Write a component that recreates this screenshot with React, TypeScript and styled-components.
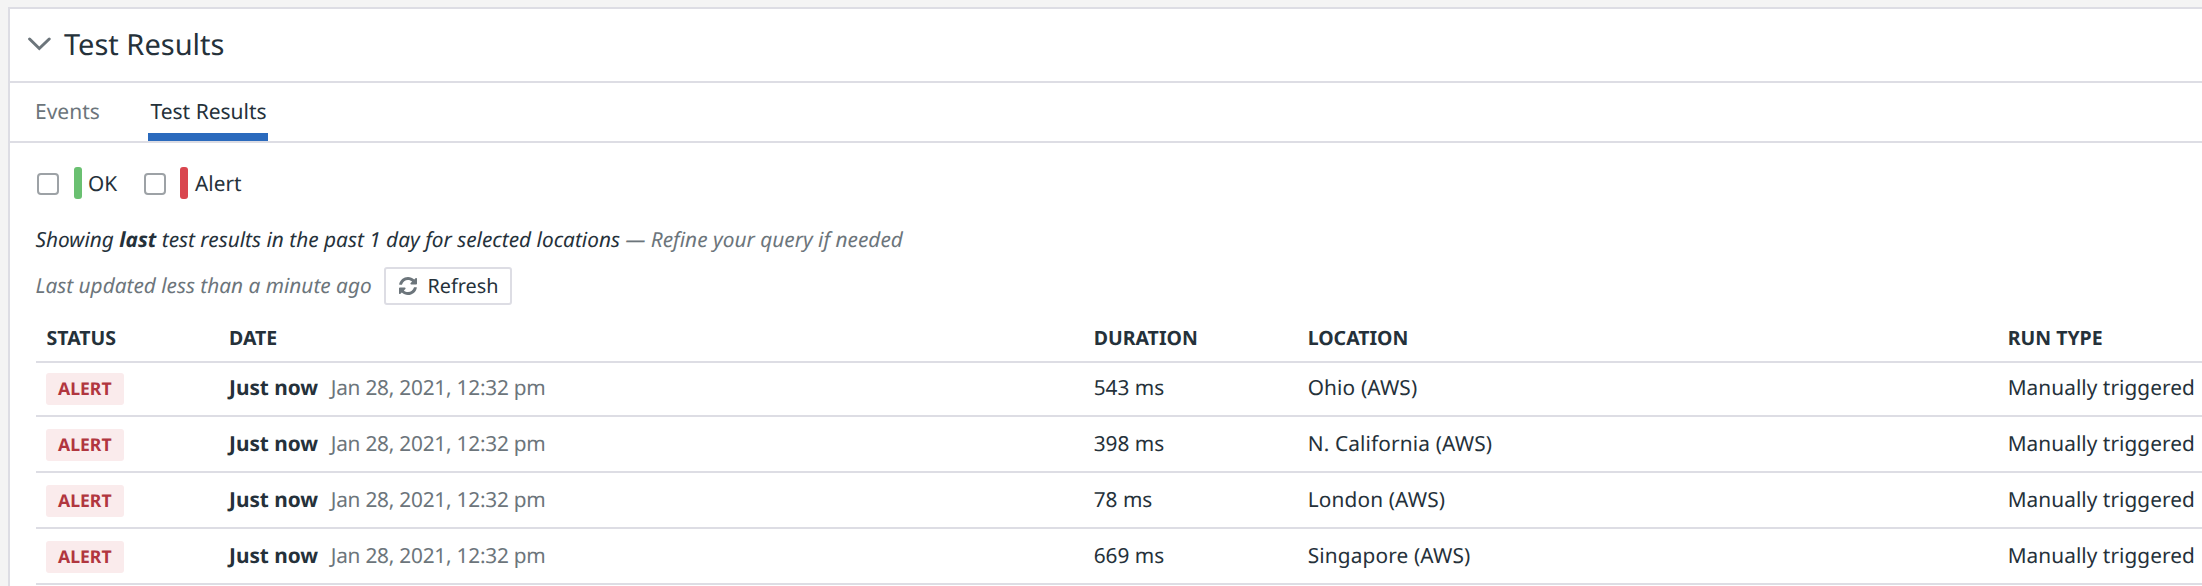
import React from "react";
import styled, { createGlobalStyle } from "styled-components";

const ink = "#25313a";
const muted = "#6c757b";
const line = "#dddde4";

const Global = createGlobalStyle`
  * { box-sizing: border-box; }
  body {
    margin: 0; background: #f4f4f4; color: ${ink}; overflow: hidden;
    font-family: "Noto Sans", sans-serif; font-size: 20.8px;
    text-rendering: geometricPrecision; -webkit-font-smoothing: antialiased;
  }
`;
const Page = styled.main`
  height: 586px; overflow: hidden; padding: 7px 0 0 8px;
`;
const Panel = styled.section`
  background: #fff; border: solid ${line}; border-width: 2px 0 0 2px; height: 700px;
`;
const Header = styled.header`
  display: flex; align-items: center; height: 74px; gap: 13px;
  padding: 0 0 2px 18px; border-bottom: 2px solid ${line};
`;
const Title = styled.h2`
  margin: 0; padding-top: 2px; font-size: 29px; font-weight: 400; line-height: 40px;
`;
const Tabs = styled.nav`
  display: flex; height: 60px; border-bottom: 2px solid ${line}; padding-left: 25px; gap: 47px;
`;
const Tab = styled.div<{ $active?: boolean }>`
  width: ${p => (p.$active ? 120 : 66)}px; height: 58px; line-height: 58px; font-size: 21px; white-space: nowrap;
  color: ${p => (p.$active ? ink : muted)};
  ${p => p.$active && "padding-left: 2.5px; box-shadow: inset 0 -8px #2a6abd;"}
`;
const Body = styled.div`
  padding-left: 26px;
`;
const Filters = styled.div`
  display: flex; align-items: center; height: 80px;
`;
const Filter = styled.label`
  display: flex; align-items: center; min-width: 107px;
`;
const Box = styled.span<{ $gap: number }>`
  width: 22px; height: 22px; border: 2px solid #9da2a6; border-radius: 4px; margin: 2px ${p => p.$gap}px 0 1px;
`;
const Bar = styled.span<{ $color: string }>`
  width: 8px; height: 32px; border-radius: 3px; background: ${p => p.$color}; margin-right: 6px;
`;
const FilterLabel = styled.span<{ $indent?: number }>`
  line-height: 28px; padding: 2px 0 0 ${p => p.$indent ?? 0}px;
`;
const Note = styled.div`
  margin-top: 2px; height: 30px; line-height: 30px; font-style: italic; text-indent: -0.5px; letter-spacing: 0.012px;
`;
const Muted = styled.span`
  color: ${muted};
`;
const Stamp = styled(Muted)`
  letter-spacing: -0.22px;
`;
const Updated = styled.div`
  display: flex; align-items: center; height: 38px; margin-top: 12px;
`;
const UpdatedText = styled.span`
  width: 348px; line-height: 30px; font-style: italic; color: ${muted}; text-indent: -0.5px; white-space: nowrap;
`;
const Refresh = styled.button`
  display: flex; align-items: center; gap: 10.5px; width: 128px; height: 38px; padding: 0 0 0 13px;
  border: 2px solid ${line}; border-radius: 3px; background: #fff; color: ${ink};
  font-family: inherit; font-size: 19.8px; text-rendering: inherit;
`;
const RefreshLabel = styled.span`
  line-height: 28px; padding-bottom: 1px;
`;
const columns = "182.5px 864.7px 214px 700px 1fr";
const HeadRow = styled.div`
  display: grid; grid-template-columns: ${columns}; white-space: nowrap;
  height: 58px; padding: 19px 0 0 10.5px; line-height: 28px;
  border-bottom: 2px solid ${line}; font-size: 19.5px; font-weight: 700;
`;
const Row = styled.div<{ $first?: boolean }>`
  display: grid; grid-template-columns: ${columns}; white-space: nowrap;
  height: ${p => (p.$first ? 54 : 56)}px; padding: ${p => (p.$first ? 10 : 12)}px 0 0 10.5px; line-height: 30px;
  border-bottom: 2px solid ${line};
`;
const Badge = styled.span`
  width: 78px; height: 32px; line-height: 33px; padding-left: 12px; margin-left: -0.5px;
  border-radius: 3px; background: #faebec; color: #b1363f; font-size: 17.6px; font-weight: 700;
`;
const When = styled.span`
  display: flex; gap: 12.5px;
`;
const Place = styled.span`
  letter-spacing: 0.15px;
`;
const RunType = styled.span`
  letter-spacing: 0.06px;
`;

const rows = [
  { duration: "543 ms", location: "Ohio (AWS)" },
  { duration: "398 ms", location: "N. California (AWS)" },
  { duration: "78 ms", location: "London (AWS)" },
  { duration: "669 ms", location: "Singapore (AWS)" },
];

export default function App() {
  return (
    <Page>
      <Global />
      <Panel>
        <Header>
          <svg width="23" height="14" viewBox="0 0 23 14">
            <path d="M1.600 2l9.700 9.500L21.200 2" fill="none" stroke={muted} strokeWidth="3" strokeLinecap="round" />
          </svg>
          <Title>Test Results</Title>
        </Header>
        <Tabs>
          <Tab>Events</Tab>
          <Tab $active>Test Results</Tab>
        </Tabs>
        <Body>
          <Filters>
            <Filter><Box $gap={15} /><Bar $color="#6ac071" /><FilterLabel>OK</FilterLabel></Filter>
            <Filter><Box $gap={14} /><Bar $color="#d9464f" /><FilterLabel $indent={1}>Alert</FilterLabel></Filter>
          </Filters>
          <Note>
            Showing <b>last</b> test results in the past 1 day for selected locations{" "}
            <Muted>— Refine your query if needed</Muted>
          </Note>
          <Updated>
            <UpdatedText>Last updated less than a minute ago</UpdatedText>
            <Refresh>
              <svg width="18" height="18" viewBox="8 8 496 496" fill={muted}>
                <path d="M370.7 133.3C339.500 104 299 88 255.800 88c-77.500.1-144.300 53.200-162.800 126.900-1.300 5.400-6.100 9.200-11.700 9.200H24.100c-7.500 0-13.200-6.800-11.800-14.200C33.900 94.900 134.800 8 256 8c66.400 0 126.800 26.100 171.300 68.700L463 41c15.100-15.100 41-4.400 41 17v134c0 13.300-10.700 24-24 24H346c-21.400 0-32.100-25.900-17-41zM32 296h134c21.400 0 32.100 25.900 17 41l-41.800 41.800c31.300 29.300 71.800 45.300 114.900 45.300 77.400-.1 144.300-53.100 162.800-126.800 1.300-5.400 6.100-9.200 11.700-9.200h57.300c7.500 0 13.200 6.800 11.800 14.200C478.100 417.100 377.200 504 256 504c-66.400 0-126.800-26.100-171.300-68.700L49 471c-15.100 15.100-41 4.400-41-17V320c0-13.300 10.700-24 24-24z" />
              </svg>
              <RefreshLabel>Refresh</RefreshLabel>
            </Refresh>
          </Updated>
          <HeadRow>
            <span>STATUS</span><span>DATE</span><span>DURATION</span><span>LOCATION</span><span>RUN TYPE</span>
          </HeadRow>
          {rows.map((row, i) => (
            <Row key={row.location} $first={i === 0}>
              <Badge>ALERT</Badge>
              <When><b>Just now</b><Stamp>Jan 28, 2021, 12:32 pm</Stamp></When>
              <span>{row.duration}</span>
              <Place>{row.location}</Place>
              <RunType>Manually triggered</RunType>
            </Row>
          ))}
        </Body>
      </Panel>
    </Page>
  );
}
